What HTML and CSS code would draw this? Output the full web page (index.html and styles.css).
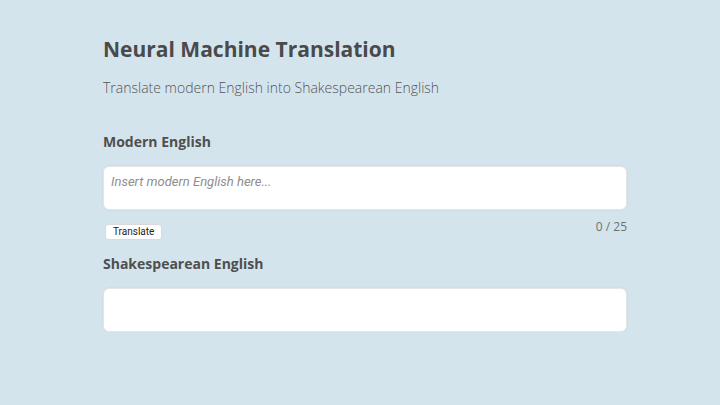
FILE: index.html
```html
<!DOCTYPE html>
<html>
<head>
<meta charset="utf-8">
<link rel="stylesheet" href="styles.css">
</head>
<body>
<main class="page">
  <h1 class="title">Neural Machine Translation</h1>
  <p class="subtitle">Translate modern English into Shakespearean English</p>
  <h2 class="label">Modern English</h2>
  <div class="field">
    <input class="box" type="text" placeholder="Insert modern English here...">
  </div>
  <div class="controls">
    <button class="btn">Translate</button>
    <span class="counter">0 / 25</span>
  </div>
  <h2 class="label label-out">Shakespearean English</h2>
  <div class="box output"></div>
</main>
</body>
</html>
```
FILE: styles.css
```css
html, body {
  margin: 0;
  padding: 0;
  background: #d4e4ed;
}
.page {
  width: 524px;
  margin-left: 103px;
  padding-top: 35px;
  font-family: "Open Sans", sans-serif;
  color: #4a4a4a;
}
.title {
  margin: 0;
  font-size: 21px;
  font-weight: 700;
  line-height: 28px;
  color: #4a4a4a;
}
.subtitle {
  margin: 15px 0 0 0;
  font-size: 14px;
  font-weight: 300;
  line-height: 20px;
  color: #555;
}
.label {
  margin: 34px 0 0 0;
  font-size: 14px;
  font-weight: 700;
  line-height: 20px;
  color: #4f4f4f;
}
.field {
  margin-top: 14px;
}
.box {
  display: block;
  box-sizing: border-box;
  width: 524px;
  height: 44px;
  margin: 0;
  padding: 0 7px;
  background: #fff;
  border: 1px solid #e3e6e8;
  border-radius: 6px;
  box-shadow: 0 0 2px rgba(0,0,0,0.08);
  font-family: Roboto, "Noto Sans", sans-serif;
  font-size: 13px;
  outline: none;
}
.box::placeholder {
  font-style: italic;
  color: #8e8e8e;
}
input.box {
  padding-bottom: 14px;
}
.controls {
  display: flex;
  justify-content: space-between;
  align-items: flex-start;
  margin-top: 9px;
}
.btn {
  margin: 5px 0 0 2px;
  padding: 0 7px;
  height: 16px;
  background: #fff;
  border: 1px solid #d8dadc;
  border-radius: 3px;
  font-family: Roboto, "Noto Sans", sans-serif;
  font-size: 10px;
  line-height: 14px;
  color: #222;
}
.counter {
  font-family: "Open Sans", sans-serif;
  font-size: 12px;
  line-height: 16px;
  color: #707070;
}
.label-out {
  margin-top: 14px;
}
.output {
  margin-top: 14px;
}
```
